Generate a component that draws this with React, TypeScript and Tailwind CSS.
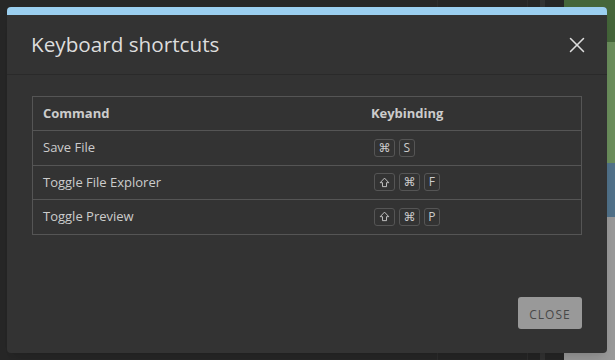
import { X } from "lucide-react";

interface IShortcut {
  command: string;
  keys: string[];
}

const shortcuts: IShortcut[] = [
  { command: "Save File", keys: ["⌘", "S"] },
  { command: "Toggle File Explorer", keys: ["shift", "⌘", "F"] },
  { command: "Toggle Preview", keys: ["shift", "⌘", "P"] },
];

function ShiftIcon() {
  return (
    <svg width="11" height="11" viewBox="0 0 12 12" fill="none" stroke="#ccc" strokeWidth="1" strokeLinejoin="round">
      <path d="M6 1.2 L1.3 6.2 H3.8 V10.5 H8.2 V6.2 H10.7 Z" />
    </svg>
  );
}

function Key({ label }: { label: string }) {
  if (label === "shift") {
    return (
      <span className="inline-flex items-center justify-center h-[18px] w-[21px] border border-[#555] rounded-[3px]">
        <ShiftIcon />
      </span>
    );
  }
  const symbol = label === "⌘";
  return (
    <span
      className={
        symbol
          ? "inline-flex items-center justify-center h-[18px] w-[21px] border border-[#555] rounded-[3px] text-[12px] leading-none text-[#ccc] font-['DejaVu_Sans',sans-serif]"
          : "inline-flex items-center justify-center h-[18px] min-w-[16px] px-[3px] border border-[#555] rounded-[3px] text-[12px] leading-none text-[#ccc] font-['Open_Sans',sans-serif]"
      }
    >
      {label}
    </span>
  );
}

export default function App() {
  return (
    <div className="relative w-[615px] h-[360px] overflow-hidden font-['Open_Sans',sans-serif]">
      {/* editor behind the modal */}
      <div className="flex flex-row h-full">
        <div className="w-[437px] h-full bg-[#272727]" />
        <div className="w-[90px] h-full bg-[#262626] border-l border-[#2e2e2e]" />
        <div className="w-[13px] h-full bg-[#252525] border-l border-[#2e2e2e]" />
        <div className="w-[5px] h-full bg-[#333]" />
        <div className="w-[19px] h-full bg-[#262626]" />
        <div className="flex flex-col flex-1 h-full">
          <div className="h-[42px] bg-[#45663a]" />
          <div className="h-[121px] bg-[#6b8e5c]" />
          <div className="h-[54px] bg-[#51728a]" />
          <div className="flex-1 bg-[#9a9a9a]" />
        </div>
      </div>

      {/* modal */}
      <div className="absolute inset-0 p-[7px]">
        <div className="flex flex-col w-[600px] h-[346px] bg-[#333] rounded-[4px] overflow-hidden shadow-lg">
          <div className="h-[8px] bg-[#9bcff0] shrink-0" />
          <div className="flex flex-row items-center justify-between h-[60px] pl-[24px] pr-[17px] border-b border-[#2a2a2a] shrink-0">
            <h2 className="text-[20.7px] text-[#ddd] leading-none">Keyboard shortcuts</h2>
            <X className="w-[26px] h-[26px] text-[#ddd]" strokeWidth={1.4} />
          </div>
          <div className="px-[25px] pt-[21px]">
            <table className="w-full border-collapse border border-[#555] text-[13px] text-[#ccc]">
              <thead>
                <tr className="h-[34px]">
                  <th className="w-[60%] text-left font-bold pl-[10px] border-b border-[#555]">Command</th>
                  <th className="text-left font-bold pl-[9px] border-b border-[#555]">Keybinding</th>
                </tr>
              </thead>
              <tbody>
                {shortcuts.map((s) => (
                  <tr key={s.command} className="h-[34.5px] border-b border-[#555]">
                    <td className="pl-[10px]">{s.command}</td>
                    <td className="pl-[12px]">
                      <div className="flex flex-row gap-[4px]">
                        {s.keys.map((k, i) => (
                          <Key key={i} label={k} />
                        ))}
                      </div>
                    </td>
                  </tr>
                ))}
              </tbody>
            </table>
          </div>
          <div className="flex flex-row justify-end mt-auto px-[25px] pb-[24px]">
            <button className="w-[64px] h-[32px] bg-[#999] rounded-[3px]">
              <span className="text-[12px] tracking-[1px] text-[#484848] uppercase">Close</span>
            </button>
          </div>
        </div>
      </div>
    </div>
  );
}
